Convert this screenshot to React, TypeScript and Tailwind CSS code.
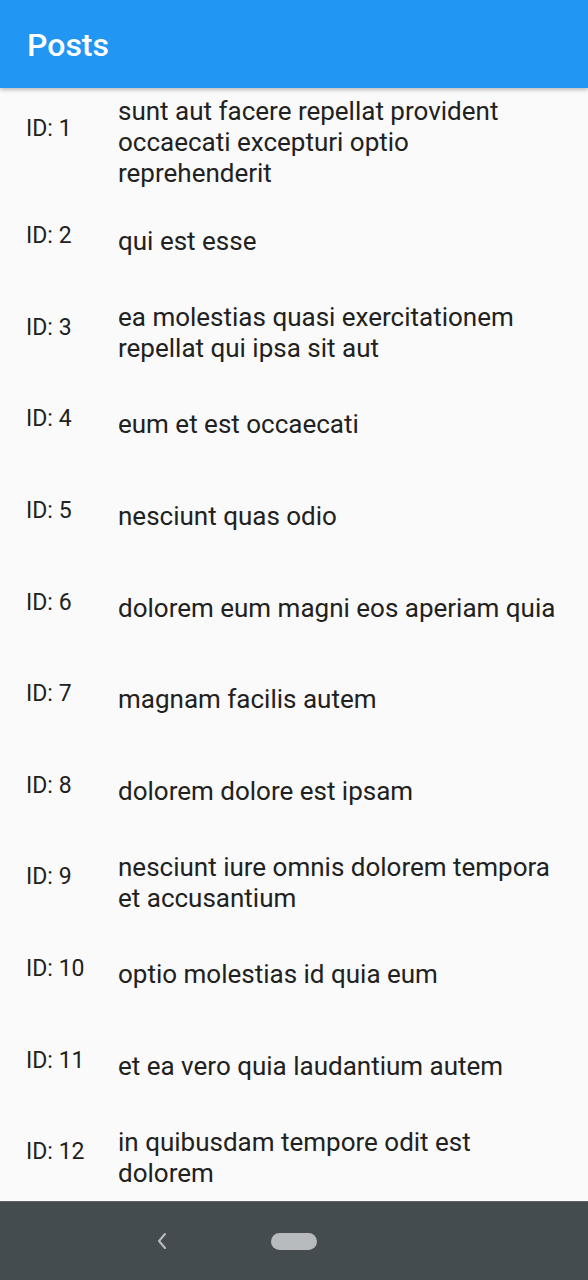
const posts = [
  { id: 1, title: 'sunt aut facere repellat provident occaecati excepturi optio reprehenderit' },
  { id: 2, title: 'qui est esse' },
  { id: 3, title: 'ea molestias quasi exercitationem repellat qui ipsa sit aut' },
  { id: 4, title: 'eum et est occaecati' },
  { id: 5, title: 'nesciunt quas odio' },
  { id: 6, title: 'dolorem eum magni eos aperiam quia' },
  { id: 7, title: 'magnam facilis autem' },
  { id: 8, title: 'dolorem dolore est ipsam' },
  { id: 9, title: 'nesciunt iure omnis dolorem tempora et accusantium' },
  { id: 10, title: 'optio molestias id quia eum' },
  { id: 11, title: 'et ea vero quia laudantium autem' },
  { id: 12, title: 'in quibusdam tempore odit est dolorem' },
];

export default function App() {
  return (
    <div className="w-[588px] h-[1280px] flex flex-col bg-[#fafafa] font-['Roboto','Liberation_Sans',sans-serif] overflow-hidden">
      {/* App bar */}
      <header className="h-[88px] shrink-0 bg-[#2196f3] flex items-center px-[27px] pt-[2px] shadow-[0_2px_4px_rgba(0,0,0,0.25)] z-10">
        <h1 className="text-white text-[32px] font-medium">Posts</h1>
      </header>

      {/* List */}
      <main className="flex-1 overflow-hidden">
        {posts.map(post => (
          <div key={post.id} className="flex items-center min-h-[91.6px] py-[7.5px] pl-[26px] pr-[26px]">
            <span className={`w-[92px] shrink-0 text-[23px] leading-[27px] text-[#212121] ${post.id === 1 ? 'mb-[27px]' : 'mb-[12px]'}`}>
              ID: {post.id}
            </span>
            <p className="flex-1 text-[26px] leading-[31px] text-[#212121]">{post.title}</p>
          </div>
        ))}
      </main>

      {/* System nav bar */}
      <nav className="h-[79px] shrink-0 bg-[#454c50] border-t border-[#5d6367] flex items-center">
        <svg width="12" height="18" viewBox="0 0 12 18" className="ml-[156px]">
          <polyline points="9,2 3,9 9,16" fill="none" stroke="#b8bcbe" strokeWidth="2" strokeLinecap="round" strokeLinejoin="round" />
        </svg>
        <div className="ml-[103px] w-[46px] h-[17px] rounded-full bg-[#b8bbbd]" />
      </nav>
    </div>
  );
}
